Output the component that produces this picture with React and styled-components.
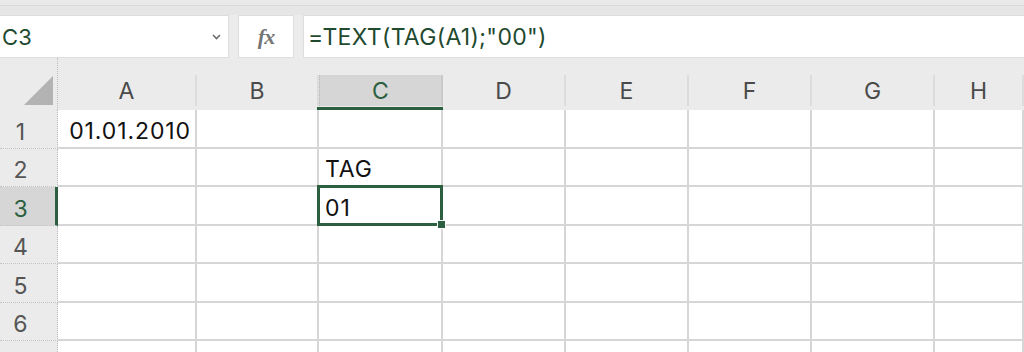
import React from "react";
import styled, { createGlobalStyle } from "styled-components";

const GREEN = "#2b5f3f";
const GRID = "#d6d6d6";
const FONT = `Inter, "Liberation Sans", Arial, sans-serif`;

const Global = createGlobalStyle`
  html, body { margin: 0; padding: 0; }
  body {
    width: 1024px;
    height: 352px;
    overflow: hidden;
    background: #ececec;
    font-family: ${FONT};
  }
`;

const Window = styled.div`
  display: flex;
  flex-direction: column;
  width: 1024px;
  height: 352px;
  overflow: hidden;
  background: #ececec;
`;

const TopBand = styled.div`
  height: 15px;
  flex: none;
  background: linear-gradient(#e9e9e9 0 5px, #d9d9d9 5px 6px, #e6e6e6 6px);
`;

const FormulaBar = styled.div`
  display: flex;
  gap: 9px;
  height: 43px;
  flex: none;
`;

const Box = styled.div`
  background: #fff;
  border: 1px solid #dedede;
  box-sizing: border-box;
  display: flex;
  align-items: center;
`;

const NameBox = styled(Box)`
  width: 229px;
  justify-content: space-between;
  padding: 0 7px 0 2px;
  border-left: none;
  font-size: 22px;
  letter-spacing: 0.3px;
  color: #1f4a30;
`;

const FxBox = styled(Box)`
  width: 56px;
  justify-content: center;
  font-family: "Liberation Serif", "DejaVu Serif", serif;
  font-style: italic;
  font-weight: bold;
  font-size: 22px;
  color: #767676;
  letter-spacing: -1px;
`;

const FormulaBox = styled(Box)`
  flex: 1;
  padding-left: 4px;
  border-right: none;
  font-size: 23px;
  letter-spacing: 0.3px;
  color: #1f4a30;
`;

const Sheet = styled.div`
  display: grid;
  grid-template-columns: 58px 139px 122px 124px 123px 123px 123px 123px 1fr;
  grid-template-rows: 52px 39px 38px 39px 38px 39px 38px 39px;
  background: #fff;
  flex: none;
`;

const Corner = styled.div`
  background: #ebebeb;
  border-right: 1px dotted #bdbdbd;
  box-sizing: border-box;
  display: flex;
  align-items: flex-end;
  justify-content: flex-end;
  padding: 0 4px 5px 0;
`;

const ColHeader = styled.div`
  background: #ebebeb;
  padding-top: 17px;
  display: flex;
  flex-direction: column;
  box-sizing: border-box;
`;

const ColLabel = styled.div`
  height: 31px;
  display: flex;
  align-items: center;
  justify-content: center;
  font-size: 23px;
  color: ${(p) => (p.$active ? GREEN : "#4a4a4a")};
  background: ${(p) => (p.$active ? "#d6d6d6" : "transparent")};
  border-right: 2px solid ${(p) => (p.$active ? "#c9c9c9" : "#dcdcdc")};
  border-left: ${(p) => (p.$active ? "1px dotted #b8b8b8" : "none")};
`;

const ColUnderline = styled.div`
  height: 4px;
  background: ${(p) => (p.$active ? GREEN : "transparent")};
  margin: 0 -2px;
  border-top: 1px solid ${(p) => (p.$active ? "#ebebeb" : "transparent")};
  box-sizing: border-box;
`;

const RowHeader = styled.div`
  background: ${(p) => (p.$active ? "#d6d6d6" : "#ebebeb")};
  border-right: ${(p) => (p.$active ? `3px solid ${GREEN}` : "1px dotted #bdbdbd")};
  border-bottom: 1px dotted #c4c4c4;
  box-sizing: border-box;
  display: flex;
  align-items: flex-end;
  justify-content: center;
  padding: 0 ${(p) => (p.$active ? "14px" : "16px")} 4px 0;
  font-size: 23px;
  line-height: 1;
  color: ${(p) => (p.$active ? GREEN : "#555")};
`;

const Cell = styled.div`
  position: relative;
  z-index: ${(p) => (p.$selected ? 2 : "auto")};
  border-right: 2px solid ${GRID};
  border-bottom: 2px solid ${GRID};
  box-sizing: border-box;
  display: flex;
  align-items: flex-end;
  justify-content: ${(p) => (p.$right ? "flex-end" : "flex-start")};
  padding: 0 4px 4px 6px;
  font-size: 23px;
  letter-spacing: 0.9px;
  line-height: 1;
  color: #111;
  white-space: nowrap;
`;

const Selection = styled.div`
  position: absolute;
  left: -2px;
  top: -2px;
  right: -2px;
  bottom: -2px;
  border: 3px solid ${GREEN};
  pointer-events: none;
`;

const FillHandle = styled.div`
  position: absolute;
  right: -6px;
  bottom: -6px;
  width: 7px;
  height: 7px;
  background: ${GREEN};
  border: 1px solid #fff;
`;

const cols = ["A", "B", "C", "D", "E", "F", "G", "H"];
const data = {
  A1: { v: "01.01.2010", right: true },
  C2: { v: "TAG" },
  C3: { v: "01" },
};

export default function App() {
  const rows = [1, 2, 3, 4, 5, 6, 7];
  return (
    <Window>
      <Global />
      <TopBand />
      <FormulaBar>
        <NameBox>
          <span>C3</span>
          <svg width="9" height="6" viewBox="0 0 9 6">
            <path d="M1 1l3.5 3.5L8 1" fill="none" stroke="#6d6d6d" strokeWidth="1.6" />
          </svg>
        </NameBox>
        <FxBox>fx</FxBox>
        <FormulaBox>=TEXT(TAG(A1);"00")</FormulaBox>
      </FormulaBar>
      <Sheet>
        <Corner>
          <svg width="29" height="29" viewBox="0 0 29 29">
            <path d="M29 0V29H0Z" fill="#b3b3b3" />
          </svg>
        </Corner>
        {cols.map((c) => (
          <ColHeader key={c}>
            <ColLabel $active={c === "C"}>{c}</ColLabel>
            <ColUnderline $active={c === "C"} />
          </ColHeader>
        ))}
        {rows.map((r) => (
          <React.Fragment key={r}>
            <RowHeader $active={r === 3}>{r < 7 ? r : ""}</RowHeader>
            {cols.map((c) => {
              const d = data[c + r];
              const sel = c === "C" && r === 3;
              return (
                <Cell key={c} $right={d && d.right} $selected={sel}>
                  {d ? d.v : ""}
                  {sel && (
                    <Selection>
                      <FillHandle />
                    </Selection>
                  )}
                </Cell>
              );
            })}
          </React.Fragment>
        ))}
      </Sheet>
    </Window>
  );
}
